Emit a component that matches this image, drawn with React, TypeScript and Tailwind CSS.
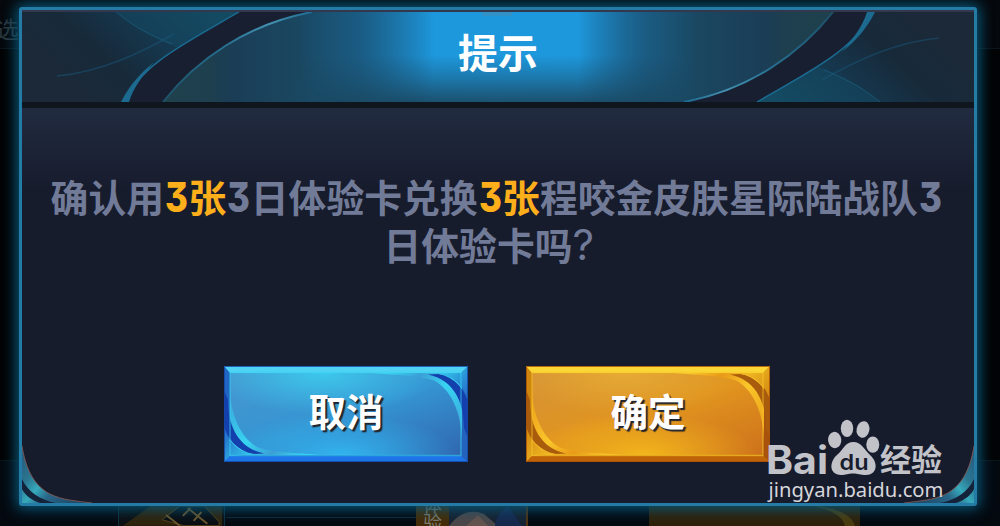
import React from 'react';

interface ButtonPalette {
  id: string;
  frame: string;
  frameTop: string;
  frameRight: string;
  frameBottom: string;
  edge: string;
  shade: string;
  glow: string;
  glowSoft: string;
  fill: [string, string, string];
  light: string;
  bottomLight: string;
}

const BLUE: ButtonPalette = {
  id: 'blue',
  frame: '#2266c4',
  frameTop: '#4fd2f3',
  frameRight: '#2363bd',
  frameBottom: '#1c74e6',
  edge: '#1446a8',
  shade: '#1440ad',
  glow: '#38d4f2',
  glowSoft: '#3c9fd6',
  fill: ['#4796cf', '#3595d2', '#3067b0'],
  light: '#3cc8ec',
  bottomLight: '#32b4ee',
};

const GOLD: ButtonPalette = {
  id: 'gold',
  frame: '#cf860f',
  frameTop: '#fbd735',
  frameRight: '#a9520c',
  frameBottom: '#bf6308',
  edge: '#a84e08',
  shade: '#a85c0c',
  glow: '#fac62a',
  glowSoft: '#e89a18',
  fill: ['#d59236', '#e1951f', '#cd711b'],
  light: '#e6aa34',
  bottomLight: '#f3b61c',
};

function ButtonArt({ palette: p }: { palette: ButtonPalette }) {
  const corner = (
    <>
      <path d="M6 20 C6 44 14 70 33 81 C46 86 70 87 98 89 L6 89 Z" fill={`url(#${p.id}-ribbon)`} />
      <path d="M0 24 L4 34 C4 60 14 82 40 87.5 L29 88 C12 84 4 73 0 60 Z" fill={p.shade} />
      <path d="M0 62 C5 76 13 86 30 88 L6 90 L0 96 Z" fill={`url(#${p.id}-wedge)`} />
    </>
  );

  return (
    <svg className="absolute inset-0 h-full w-full" viewBox="0 0 244 96" preserveAspectRatio="none">
      <defs>
        <linearGradient id={`${p.id}-fill`} x1="0" y1="0" x2="1" y2="1">
          <stop offset="0" stopColor={p.fill[0]} />
          <stop offset="0.5" stopColor={p.fill[1]} />
          <stop offset="1" stopColor={p.fill[2]} />
        </linearGradient>
        <radialGradient id={`${p.id}-light`} cx="0.4" cy="0" r="0.5">
          <stop offset="0" stopColor={p.light} />
          <stop offset="1" stopColor={p.light} stopOpacity="0" />
        </radialGradient>
        <radialGradient id={`${p.id}-bottom`} cx="0.48" cy="1" r="0.5">
          <stop offset="0" stopColor={p.bottomLight} />
          <stop offset="1" stopColor={p.bottomLight} stopOpacity="0" />
        </radialGradient>
        <linearGradient id={`${p.id}-ribbon`} gradientUnits="userSpaceOnUse" x1="6" y1="20" x2="80" y2="90">
          <stop offset="0" stopColor={p.glowSoft} />
          <stop offset="0.5" stopColor={p.glow} />
          <stop offset="0.75" stopColor={p.glowSoft} />
          <stop offset="1" stopColor={p.glow} />
        </linearGradient>
        <linearGradient id={`${p.id}-wedge`} x1="0" y1="0" x2="1" y2="1">
          <stop offset="0" stopColor={p.frame} />
          <stop offset="1" stopColor={p.glow} />
        </linearGradient>
      </defs>
      <rect width="244" height="96" fill={p.frame} />
      <path d="M244 0 V96 L237 90 V6 Z" fill={p.frameRight} />
      <rect x="6" y="7" width="231" height="82" fill={`url(#${p.id}-fill)`} />
      <rect x="6" y="7" width="231" height="82" fill={`url(#${p.id}-light)`} />
      <rect x="6" y="7" width="231" height="82" fill={`url(#${p.id}-bottom)`} />
      {corner}
      <g transform="rotate(180 122 48)">{corner}</g>
      <path d="M0 96 L6 90 H237 L244 96 Z" fill={p.frameBottom} />
      <path d="M0 0 H244 L237 7 H6 Z" fill={p.frameTop} />
      <path d="M6 6.5 H237 V89.5 H6 Z" fill="none" stroke={p.glow} strokeWidth="1.4" opacity="0.55" />
      <path d="M0.5 0.5 H243.5 V95.5 H0.5 Z" fill="none" stroke={p.edge} strokeWidth="1" opacity="0.8" />
    </svg>
  );
}

function GameButton({ palette, children }: { palette: ButtonPalette; children: React.ReactNode }) {
  return (
    <button className="relative flex h-24 w-[244px] items-center justify-center">
      <ButtonArt palette={palette} />
      <span className="relative -mt-[9px] text-[37.5px] font-bold leading-none text-white [text-shadow:2px_2px_1px_#20242c]">
        {children}
      </span>
    </button>
  );
}

function HeaderArt() {
  const side = (
    <>
      <rect width="330" height="90" fill="url(#head-side)" />
      <path d="M94 0 C125 27 158 36 183 45 L240 0 Z" fill="#15506a" opacity="0.4" />
      <path d="M94 0 C112 15 130 24 150 32" fill="none" stroke="#1b6383" strokeWidth="1" opacity="0.6" />
      <path d="M35 64 C80 60 120 40 152 22" fill="none" stroke="#19577c" strokeWidth="1.5" opacity="0.5" />
      <path d="M141 90 C170 50 225 12 290 0 H476 V90 Z" fill="url(#head-mid)" />
      <path d="M102 90 C120 52 160 33 217 0 H290 C225 12 174 48 141 90 Z" fill="#181f30" />
      <path d="M102 90 C120 52 160 33 217 0" fill="none" stroke="#1b6c93" strokeWidth="1.4" />
      <path d="M99 90 C108 72 119 61 132 50 C121 64 112 74 107 90 Z" fill="#1c6a90" />
      <path d="M141 90 C174 48 225 12 290 0" fill="none" stroke="url(#head-rim)" strokeWidth="2" />
    </>
  );

  return (
    <svg className="absolute inset-0 h-full w-full" viewBox="0 0 952 90">
      <defs>
        <linearGradient id="head-side" x1="0" y1="0.3" x2="1" y2="0">
          <stop offset="0" stopColor="#1b2938" />
          <stop offset="0.18" stopColor="#172a3a" />
          <stop offset="0.42" stopColor="#153a52" />
          <stop offset="0.65" stopColor="#15495f" />
        </linearGradient>
        <linearGradient id="head-mid" x1="0" y1="0" x2="1" y2="0">
          <stop offset="0" stopColor="#1f404c" />
          <stop offset="0.14" stopColor="#1e3f4e" />
          <stop offset="0.2" stopColor="#1b3d56" />
          <stop offset="0.45" stopColor="#1a4963" />
          <stop offset="1" stopColor="#1b4c68" />
        </linearGradient>
        <linearGradient id="head-rim" x1="0" y1="1" x2="1" y2="0">
          <stop offset="0" stopColor="#1d5069" />
          <stop offset="0.5" stopColor="#256f8f" />
          <stop offset="0.8" stopColor="#4390b0" />
          <stop offset="1" stopColor="#1f6b91" />
        </linearGradient>
        <linearGradient id="head-glow" x1="0" y1="0" x2="1" y2="0">
          <stop offset="0" stopColor="#1b6a9c" stopOpacity="0" />
          <stop offset="0.15" stopColor="#1b6a9c" stopOpacity="0.55" />
          <stop offset="0.34" stopColor="#1e98dc" />
          <stop offset="0.7" stopColor="#1e98dc" />
          <stop offset="0.87" stopColor="#1b6a9c" stopOpacity="0.55" />
          <stop offset="1" stopColor="#1b6a9c" stopOpacity="0" />
        </linearGradient>
        <linearGradient id="head-fade" x1="0" y1="0" x2="0" y2="1">
          <stop offset="0.48" stopColor="#fff" />
          <stop offset="0.72" stopColor="#9c9c9c" />
          <stop offset="1" stopColor="#141414" />
        </linearGradient>
        <mask id="head-mask">
          <rect x="266" width="420" height="90" fill="url(#head-fade)" />
        </mask>
      </defs>
      {side}
      <g transform="rotate(180 476 45)">{side}</g>
      <rect x="276" width="400" height="90" fill="url(#head-glow)" mask="url(#head-mask)" />
      <rect x="460" width="30" height="4" fill="#3b8fbc" opacity="0.7" />
    </svg>
  );
}

function CornerArt({ className }: { className: string }) {
  return (
    <svg className={`absolute bottom-0 h-[60px] w-[72px] ${className}`} viewBox="0 0 72 60">
      <defs>
        <linearGradient id="corner-shine" gradientUnits="userSpaceOnUse" x1="0" y1="5" x2="62" y2="60">
          <stop offset="0" stopColor="#24587c" />
          <stop offset="0.3" stopColor="#2b7590" />
          <stop offset="0.46" stopColor="#36aabb" />
          <stop offset="0.62" stopColor="#286688" />
          <stop offset="1" stopColor="#1b4262" />
        </linearGradient>
      </defs>
      <path d="M0 3 C4 28 13 43 28 51 C40 57 54 58 70 60 H0 Z" fill="url(#corner-shine)" />
      <path d="M0 36 C6 49 18 57 34 60 L18 60 C9 57 3 52 0 46 Z" fill="#14233a" />
      <path d="M0 3 C4 28 13 43 28 51 C40 57 54 58 70 60" fill="none" stroke="#8c5a51" strokeWidth="0.8" />
    </svg>
  );
}

// Dimmed remains of the screen behind the dialog
function Backdrop() {
  return (
    <div className="absolute inset-0 overflow-hidden bg-[#020304]">
      <div className="absolute inset-x-0 top-0 h-[49px] border-b border-[#0b151b] bg-[#05080c]" />
      <div className="absolute inset-x-0 bottom-0 h-[66px] border-t border-[#07151b] bg-[#040910]" />
      <span className="absolute -left-1 top-[17px] text-[23px] leading-none text-[#2c373d]">选</span>
      <div className="absolute bottom-0 left-[118px] h-[30px] w-[107px] overflow-hidden border-x border-[#0c3040] bg-[#0c0f12]">
        <svg className="h-full w-full" viewBox="0 0 107 30">
          <path d="M4 30 L32 10 H105 V30 Z" fill="#2f230c" />
          <path d="M44 24 L62 10 H87 L102 26 V30 H66 Z" fill="#0a0e12" stroke="#57431c" />
          <path d="M48 19 L62 30 M70 12 L90 28 M65 20 L73 12 M76 25 L84 16" stroke="#6c552a" strokeWidth="2" />
        </svg>
      </div>
      <div className="absolute bottom-0 left-[226px] h-[9px] w-[190px] border-t border-[#0b2731]" />
      <div className="absolute bottom-0 left-[416px] flex h-[24px] w-[112px] overflow-hidden border-r-2 border-[#51300e] bg-[#141923]">
        <div className="w-[33px] bg-[#442c08] text-center text-[19px] leading-[19px] text-[#7c796c]">
          <div className="-mt-[8px]">体</div>
          <div className="-mt-px">验</div>
        </div>
        <svg className="h-full w-[77px]" viewBox="0 0 77 24">
          <path d="M0 2 H77 V24 H0 Z" fill="#172230" />
          <path d="M0 24 C10 10 23 7 35 12 L49 24 Z" fill="#4b4749" />
          <path d="M17 24 L29 13 L39 24 Z" fill="#65534d" />
          <path d="M46 24 C47 13 53 9 59 4 L73 24 Z" fill="#17294d" />
        </svg>
      </div>
      <div className="absolute bottom-0 left-[649px] h-[22px] w-[211px] bg-[#2f2109]">
        <svg className="h-full w-full" viewBox="0 0 211 22">
          <path d="M155 0 C190 4 202 10 206 22 H196 C193 10 180 5 155 0 Z" fill="#4b3b0e" />
        </svg>
      </div>
    </div>
  );
}

function Watermark() {
  return (
    <svg
      className="pointer-events-none absolute left-[760px] top-[410px] h-[100px] w-[190px]"
      viewBox="760 410 190 100"
      fill="#c2c2c9"
    >
      <text x="766" y="474" fontFamily="Inter, sans-serif" fontSize="39" fontWeight="700" textLength="62" lengthAdjust="spacingAndGlyphs">
        Bai
      </text>
      <ellipse cx="834.7" cy="440" rx="6.6" ry="8.2" transform="rotate(-8 834.7 440)" />
      <ellipse cx="847" cy="428.3" rx="6.2" ry="8.6" />
      <ellipse cx="863" cy="429.5" rx="6.4" ry="8.4" transform="rotate(12 863 429.5)" />
      <ellipse cx="872.8" cy="444.6" rx="6.5" ry="8.2" />
      <path d="M853.5 442 C861 442 864 449 870 455 C879 463 877 475 866 475 C860 475 858 473.5 853 473.5 C848 473.5 846 475 841 475 C829 474.5 829 462 837 455 C844 449 845 442 853.5 442 Z" />
      <text x="839.5" y="469.5" fill="#171c2d" fontFamily="Inter, sans-serif" fontSize="21" fontWeight="600" textLength="29" lengthAdjust="spacingAndGlyphs">
        du
      </text>
      <text x="880" y="471" fontFamily="'Noto Sans CJK SC', sans-serif" fontSize="31" fontWeight="700" textLength="62" lengthAdjust="spacingAndGlyphs">
        经验
      </text>
      <text x="768.5" y="497" fontFamily="'Noto Sans', sans-serif" fontSize="20" fontWeight="400" fill="#d6d6da" textLength="175" lengthAdjust="spacingAndGlyphs">
        jingyan.baidu.com
      </text>
    </svg>
  );
}

// Flat-topped figure three
function Digit({ children }: { children: React.ReactNode }) {
  return (
    <span
      className="inline-block w-[24.5px] text-center text-[41px] font-extrabold leading-none [font-feature-settings:'cv09']"
      style={{ fontFamily: 'Inter, sans-serif' }}
    >
      <span className="inline-block origin-center -translate-x-px scale-x-[0.85]">{children}</span>
    </span>
  );
}

function App() {
  return (
    <div className="relative h-[526px] w-[1000px] overflow-hidden pl-[19px] pt-[7px] font-['Noto_Sans_CJK_SC',sans-serif]">
      <Backdrop />
      <div className="relative flex h-[499px] w-[958px] flex-col rounded-[3px] border-[3px] border-[#247ca6] bg-[#171c2d] shadow-[0_0_14px_3px_#075779]">
        <div className="h-[2px] shrink-0 bg-[#34384f]" />
        <header className="relative flex h-[90px] shrink-0 items-center justify-center">
          <HeaderArt />
          <h1 className="relative -mt-3 text-[40px] font-bold leading-none text-white">提示</h1>
        </header>
        <div className="h-[6px] shrink-0 bg-[#10161e]" />
        <main className="flex flex-1 flex-col items-center bg-[linear-gradient(#212b40_0,#171c2d_80px)]">
          <p className="-ml-[3px] mt-[64px] h-[95px] whitespace-nowrap text-center text-[37.8px] font-bold leading-[47.5px] text-[#717b98]">
            确认用
            <span className="text-[#fdae1b]"><Digit>3</Digit>张</span>
            <Digit>3</Digit>日体验卡兑换
            <span className="text-[#fdae1b]"><Digit>3</Digit>张</span>
            程咬金皮肤星际陆战队<Digit>3</Digit>
            <br />
            日体验卡吗
            <span
              className="inline-block w-[37px] text-left text-[42px] font-normal leading-none"
              style={{ fontFamily: 'Inter, sans-serif' }}
            >
              ?
            </span>
          </p>
          <div className="-ml-[2px] mt-[99px] flex gap-[58px]">
            <GameButton palette={BLUE}>取消</GameButton>
            <GameButton palette={GOLD}>确定</GameButton>
          </div>
        </main>
        <CornerArt className="left-0" />
        <CornerArt className="right-0 -scale-x-100" />
      </div>
      <Watermark />
    </div>
  );
}

export default App;
